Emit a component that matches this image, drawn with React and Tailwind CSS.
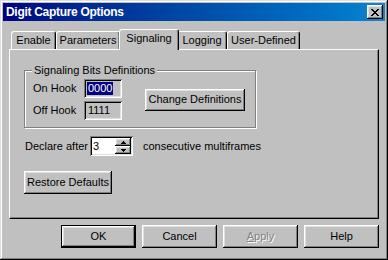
import React from 'react'

const raised =
  'shadow-[inset_-1px_-1px_0_#000,inset_1px_1px_0_#fff,inset_-2px_-2px_0_#808080,inset_2px_2px_0_#dfdfdf]'
const sunken =
  'shadow-[inset_1px_1px_0_#808080,inset_-1px_-1px_0_#fff,inset_2px_2px_0_#000,inset_-2px_-2px_0_#dfdfdf]'

function Button({ children, className = '', def = false, disabled = false }) {
  return (
    <div className={`${def ? 'border border-black' : ''} ${className}`}>
      <div className={`w-full h-full flex items-center justify-center bg-[#c0c0c0] ${raised}`}>
        <span
          className={
            disabled ? 'text-[#808080] [text-shadow:1px_1px_0_#fff]' : 'text-black'
          }
        >
          {children}
        </span>
      </div>
    </div>
  )
}

function Tab({ label, selected, className = '' }) {
  if (selected) {
    return (
      <div
        className={`relative z-10 h-[21px] -mb-[1px] bg-[#c0c0c0] border-l border-t border-white border-r border-r-black rounded-t-[3px] shadow-[inset_-1px_0_0_#808080] flex justify-center pt-[2px] ${className}`}
      >
        {label}
      </div>
    )
  }
  return (
    <div
      className={`h-[18px] bg-[#c0c0c0] border-l border-t border-white border-r border-r-black rounded-t-[3px] shadow-[inset_-1px_0_0_#808080] flex justify-center pt-[2px] ${className}`}
    >
      {label}
    </div>
  )
}

export default function App() {
  return (
    <div
      className="w-[388px] h-[260px] bg-[#c0c0c0] p-[3px] flex flex-col text-[11px] leading-[13px] text-black shadow-[inset_-1px_-1px_0_#000,inset_1px_1px_0_#dfdfdf,inset_-2px_-2px_0_#808080,inset_2px_2px_0_#fff]"
      style={{ fontFamily: '"Liberation Sans", Arial, sans-serif' }}
    >
      {/* Title bar */}
      <div className="h-[18px] flex items-center justify-between pl-[3px] pr-[2px] bg-gradient-to-r from-[#000080] to-[#1084d0]">
        <span className="text-white font-bold text-[12px] tracking-[-0.3px]">Digit Capture Options</span>
        <div className={`w-[16px] h-[14px] bg-[#c0c0c0] flex items-center justify-center ${raised}`}>
          <svg width="8" height="7" viewBox="0 0 8 7" shapeRendering="crispEdges">
            <path d="M0 0h2v1h-2zM6 0h2v1h-2zM1 1h2v1h-2zM5 1h2v1h-2zM2 2h4v1h-4zM3 3h2v1h-2zM2 4h4v1h-4zM1 5h2v1h-2zM5 5h2v1h-2zM0 6h2v1h-2zM6 6h2v1h-2z" fill="#000" />
          </svg>
        </div>
      </div>

      {/* Tabs + panel */}
      <div className="px-[6px] pt-[8px]">
        <div className="h-[20px] flex items-end pl-[2px]">
          <Tab label="Enable" className="w-[45px]" />
          <Tab label="Parameters" className="w-[64px]" />
          <Tab label="Signaling" selected className="w-[60px] -ml-[1px] -mr-[2px]" />
          <Tab label="Logging" className="w-[50px]" />
          <Tab label="User-Defined" className="w-[73px]" />
        </div>

        <div className="w-[370px] h-[170px] border-l border-t border-white border-r border-b border-r-black border-b-black shadow-[inset_-1px_-1px_0_#808080] pl-[14px] pt-[20px]">
          {/* Group box */}
          <div className="relative w-[232px] h-[58px] border border-[#808080] shadow-[1px_1px_0_#fff,inset_1px_1px_0_#fff] pl-[8px] pt-[8px]">
            <span className="absolute -top-[7px] left-[7px] px-[2px] bg-[#c0c0c0]">
              Signaling Bits Definitions
            </span>
            <div className="flex items-center">
              <div className="flex flex-col gap-[3px]">
                <div className="flex items-center">
                  <span className="w-[51px]">On Hook</span>
                  <div className={`w-[38px] h-[19px] bg-[#c0c0c0] flex items-center pl-[3px] ${sunken}`}>
                    <span className="bg-[#000080] text-white px-[1px]">0000</span>
                  </div>
                </div>
                <div className="flex items-center">
                  <span className="w-[51px]">Off Hook</span>
                  <div className={`w-[38px] h-[19px] bg-[#c0c0c0] flex items-center pl-[4px] ${sunken}`}>
                    <span>1111</span>
                  </div>
                </div>
              </div>
              <Button className="ml-[23px] w-[100px] h-[22px]">Change Definitions</Button>
            </div>
          </div>

          {/* Declare after */}
          <div className="flex items-center mt-[8px] ml-[1px]">
            <span className="w-[65px]">Declare after</span>
            <div className={`relative w-[43px] h-[20px] bg-white flex items-center pl-[3px] ${sunken}`}>
              <span>3</span>
              <div className="absolute right-[2px] top-[2px] w-[16px] h-[16px] flex flex-col">
                <div className={`flex-1 bg-[#c0c0c0] flex items-center justify-center ${raised}`}>
                  <svg width="5" height="3" viewBox="0 0 5 3" shapeRendering="crispEdges">
                    <path d="M2 0h1v1h-1zM1 1h3v1h-3zM0 2h5v1h-5z" fill="#000" />
                  </svg>
                </div>
                <div className={`flex-1 bg-[#c0c0c0] flex items-center justify-center ${raised}`}>
                  <svg width="5" height="3" viewBox="0 0 5 3" shapeRendering="crispEdges">
                    <path d="M0 0h5v1h-5zM1 1h3v1h-3zM2 2h1v1h-1z" fill="#000" />
                  </svg>
                </div>
              </div>
            </div>
            <span className="ml-[10px]">consecutive multiframes</span>
          </div>

          <Button className="mt-[15px] w-[88px] h-[23px]">Restore Defaults</Button>
        </div>

        {/* Bottom buttons */}
        <div className="flex justify-end gap-[6px] mt-[6px] w-[370px]">
          <Button def className="w-[75px] h-[23px]">OK</Button>
          <Button className="w-[75px] h-[23px]">Cancel</Button>
          <Button disabled className="w-[75px] h-[23px]">
            <span className="underline">A</span>pply
          </Button>
          <Button className="w-[75px] h-[23px]">Help</Button>
        </div>
      </div>
    </div>
  )
}
